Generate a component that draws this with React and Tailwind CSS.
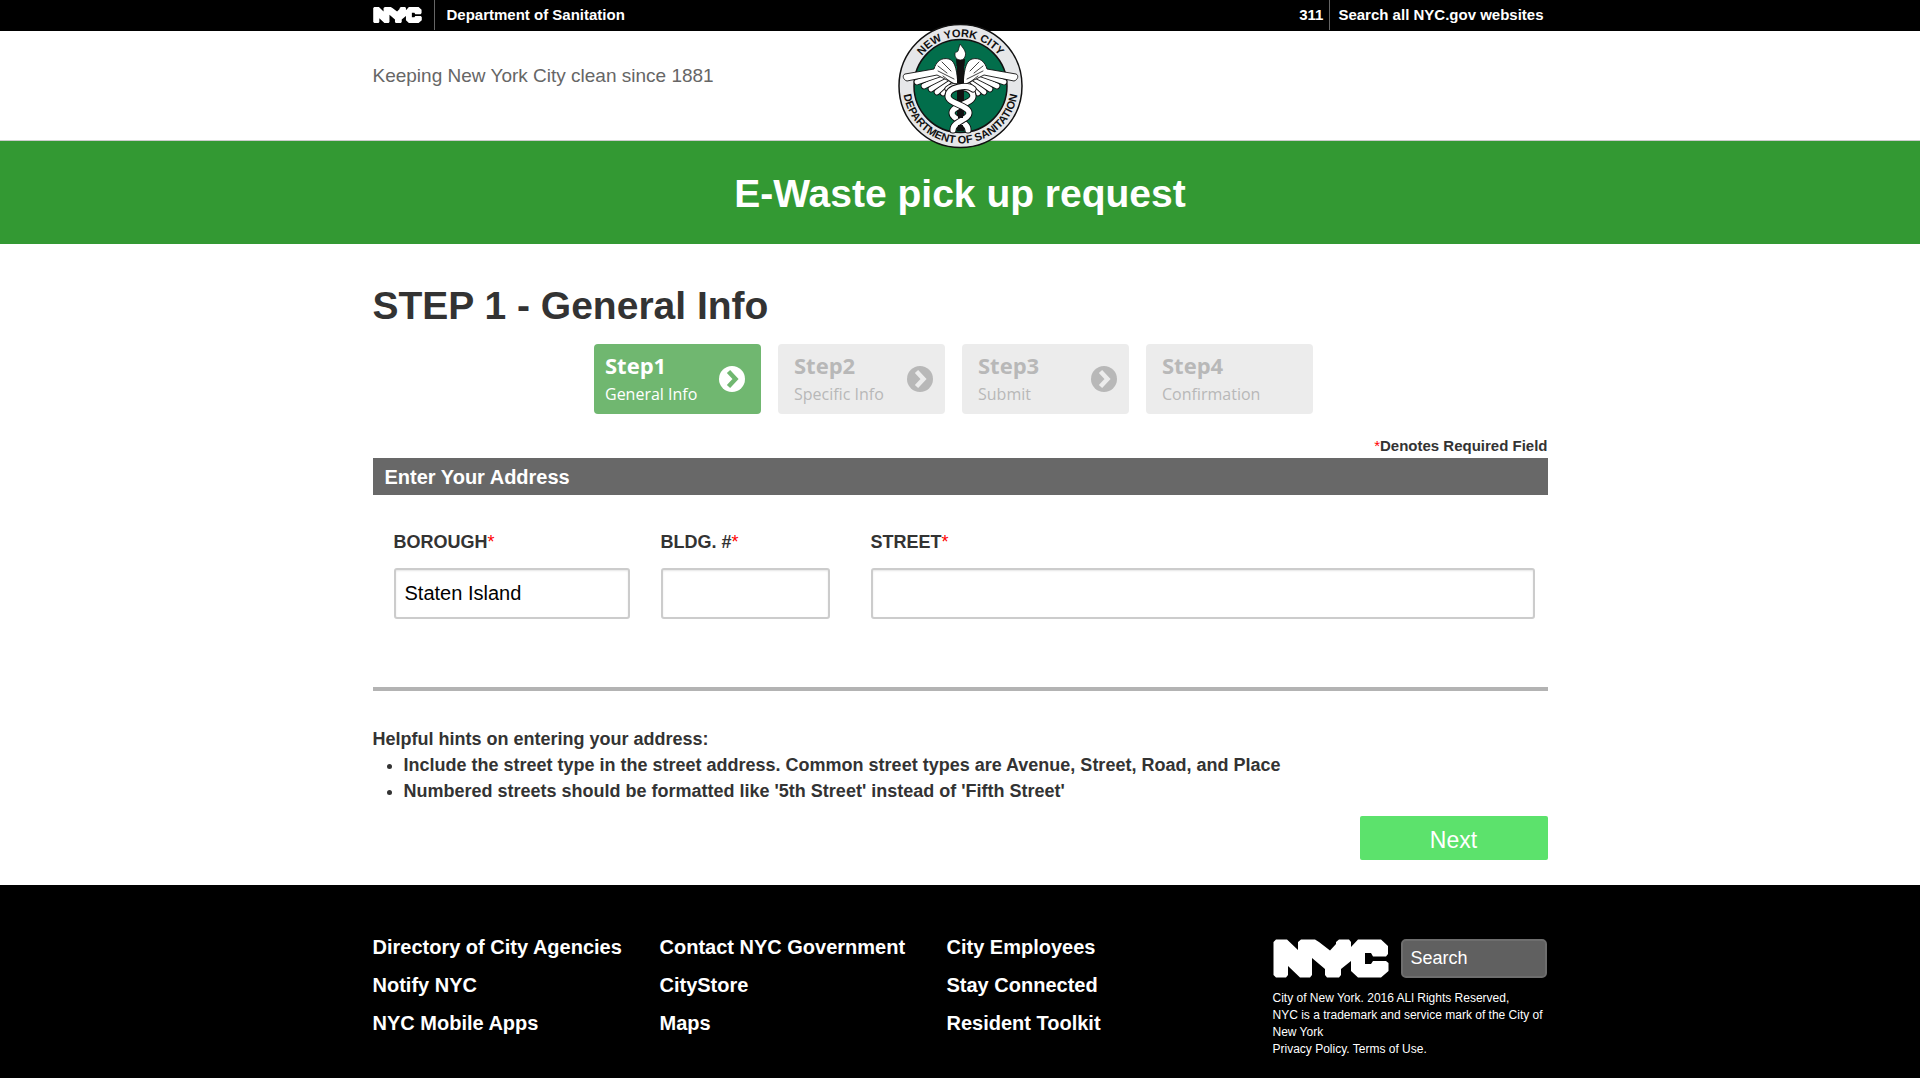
import React, { useState } from "react";

const arial = "font-['Liberation_Sans',Arial,sans-serif]";

function NycLogo({ className }) {
  return (
    <svg viewBox="0 0 116 39" className={className} role="img" aria-label="NYC" fill="currentColor">
      <path d="M3 0.500H14L25 11V3L28 0.500H42L46 3L57 11.500L63 5V3L66 0.500H76L78 3V8L85 0.500H108L115 7V15L113 17.500H100L98 14H92V25H98L100 22H113L115.500 24V32L108 38.500H85L78 32V22L68 30V36L66 38.500H54L52 36V30L39 19V36L37 38.500H27L15 27V36L13 38.500H3L0.500 36V3Z" />
    </svg>
  );
}

const feathers = [
  "M57 60L51 71",
  "M56 58L46 70",
  "M54 56L40 69",
  "M52 54L34 66",
  "M49 52L27 63",
  "M46 50L20 59",
];

function Wing() {
  return (
    <g strokeLinecap="round" strokeLinejoin="round">
      {feathers.map((d) => (
        <g key={d} fill="none">
          <path d={d} stroke="#111" strokeWidth="6.500" />
          <path d={d} stroke="#fff" strokeWidth="4.800" />
        </g>
      ))}
      <path d="M61 62C60 50 59 38 52 36C44 34 39 39 37 46L8 51C5 52 6 57 10 58L40 52L56 60Z" fill="#fff" stroke="#111" strokeWidth="0.900" />
      <path d="M41 43L50 50M45 39L54 48M46 53L55 60M41 48L57 56" fill="none" stroke="#111" strokeWidth="0.800" />
    </g>
  );
}

const snake = "M51 66C57 61 76 64 76 73C76 81 55 82 55 90C55 97 71 98 71 107";

function Snake() {
  return (
    <g fill="none">
      <path d={snake} stroke="#111" strokeWidth="7" strokeLinecap="round" />
      <path d={snake} stroke="#fff" strokeWidth="5.200" strokeLinecap="round" />
    </g>
  );
}

function Seal() {
  return (
    <svg viewBox="0 0 126 126" className="h-[126px] w-[126px]" role="img" aria-label="New York City Department of Sanitation seal">
      <defs>
        <path id="seal-top" d="M14.500 63A49 49 0 0 1 112.500 63" />
        <path id="seal-bottom" d="M6 63A57.500 57.500 0 0 0 121 63" />
      </defs>
      <circle cx="63.500" cy="63" r="61.500" fill="#e6e7e9" stroke="#111" strokeWidth="1.500" />
      <circle cx="63.500" cy="63" r="46.500" fill="#026e4b" stroke="#111" strokeWidth="1.500" />
      <g fill="#111" fontWeight="bold" fontFamily="Liberation Sans, Arial, sans-serif" textAnchor="middle">
        <text fontSize="11">
          <textPath href="#seal-top" startOffset="50%">NEW YORK CITY</textPath>
        </text>
        <text fontSize="11">
          <textPath href="#seal-bottom" startOffset="50%">DEPARTMENT OF SANITATION</textPath>
        </text>
      </g>
      <Wing />
      <g transform="matrix(-1 0 0 1 127 0)">
        <Wing />
      </g>
      <path d="M60 42H67V108H60Z" fill="#111" />
      <path d="M59 36H68L67.500 43H59.500Z" fill="#111" />
      <path d="M63 21C66 25 69 28 68.500 32C68 35 66 37 63.500 37C60 37 57.500 34 58 31C58 28 60 30 61 28Z" fill="#fff" stroke="#111" strokeWidth="0.800" />
      <Snake />
      <g transform="matrix(-1 0 0 1 127 0)">
        <Snake />
      </g>
      <path d="M61 68H66V78H61ZM61 87H66V95H61ZM61 102H66V108H61Z" fill="#111" />
    </svg>
  );
}

function StepArrow({ active }) {
  return (
    <svg viewBox="0 0 26 26" className="h-[26px] w-[26px] shrink-0" aria-hidden="true">
      <circle cx="13" cy="13" r="13" fill={active ? "#fff" : "#b8b8b8"} />
      <path d="M9.500 5.500L16.500 13L9.500 20.500" fill="none" stroke={active ? "#70b770" : "#ececec"} strokeWidth="4.500" />
    </svg>
  );
}

const steps = [
  { name: "Step1", label: "General Info", active: true, arrow: true },
  { name: "Step2", label: "Specific Info", arrow: true },
  { name: "Step3", label: "Submit", arrow: true },
  { name: "Step4", label: "Confirmation" },
];

function Step({ name, label, active, arrow }) {
  return (
    <li
      aria-current={active ? "step" : undefined}
      className={
        "flex h-[70px] w-[167px] items-center justify-between rounded-[4px] font-['Open_Sans','Noto_Sans',sans-serif] " +
        (active ? "bg-[#70b770] pr-4 pl-[11px] text-white" : "bg-[#ececec] pr-3 pl-4 text-[#b8b8b8]")
      }
    >
      <div className="whitespace-nowrap">
        <div className="text-[22px] leading-[30px] font-bold">{name}</div>
        <div className="text-[16px] leading-[28px]">{label}</div>
      </div>
      {arrow && <StepArrow active={active} />}
    </li>
  );
}

function Field({ id, label, value, onChange, className }) {
  return (
    <div className={className}>
      <label htmlFor={id} className="block text-[18px] leading-[26px] font-bold">
        {label}
        <span className="font-normal text-[#f00]">*</span>
      </label>
      <input
        id={id}
        type="text"
        value={value}
        onChange={onChange}
        className="mt-[13px] block h-[51px] w-full rounded-[3px] border-2 border-[#ccc] bg-white px-[9px] text-[20px] text-black shadow-[inset_0_1px_2px_rgba(0,0,0,0.1)]"
      />
    </div>
  );
}

const footerColumns = [
  ["Directory of City Agencies", "Notify NYC", "NYC Mobile Apps"],
  ["Contact NYC Government", "CityStore", "Maps"],
  ["City Employees", "Stay Connected", "Resident Toolkit"],
];

export default function App() {
  const [form, setForm] = useState({ borough: "Staten Island", bldg: "", street: "" });
  const update = (key) => (e) => setForm({ ...form, [key]: e.target.value });

  return (
    <div className={"flex min-h-screen flex-col bg-white text-[#333] " + arial}>
      <div className="bg-black text-white">
        <div className="mx-auto flex h-[31px] max-w-[1175px] items-start justify-between text-[15px] leading-[30px] font-bold">
          <div className="flex">
            <a href="#nyc" className="flex h-[30px] w-[62px] items-center border-r border-[#666]">
              <NycLogo className="h-[18px] w-[49px]" />
            </a>
            <a href="#sanitation" className="pl-3">Department of Sanitation</a>
          </div>
          <div className="flex pr-1">
            <a href="#311" className="border-r border-[#666] pr-[6px]">311</a>
            <a href="#search" className="pl-2">Search all NYC.gov websites</a>
          </div>
        </div>
      </div>

      <header className="border-b border-[#ccc]">
        <div className="relative mx-auto h-[109px] max-w-[1175px]">
          <p className="pt-8 text-[19px] leading-[26px] text-[#666]">Keeping New York City clean since 1881</p>
          <div className="absolute -top-2 left-1/2 -translate-x-1/2">
            <Seal />
          </div>
        </div>
      </header>

      <div className="bg-[#339933] pt-[29px] pb-[26px] text-center text-white">
        <h1 className="text-[39px] leading-[48px] font-bold">E-Waste pick up request</h1>
      </div>

      <main className="mx-auto w-full max-w-[1175px] pt-[38px] pb-[25px]">
        <h2 className="text-[39px] leading-[48px] font-bold">STEP 1 - General Info</h2>
        <ol className="mt-[14px] flex justify-center gap-[17px] pr-[13px]">
          {steps.map((s) => (
            <Step key={s.name} {...s} />
          ))}
        </ol>

        <form onSubmit={(e) => e.preventDefault()}>
          <p className="mt-5 text-right text-[15px] leading-6 font-bold">
            <span className="font-normal text-[#f00]">*</span>Denotes Required Field
          </p>
          <h3 className="bg-[#686868] pt-px pl-3 text-[20px] leading-9 font-bold text-white">Enter Your Address</h3>

          <div className="flex border-b-4 border-[#b3b3b3] pt-[34px] pr-[13px] pb-[68px] pl-[21px]">
            <Field id="borough" label="BOROUGH" value={form.borough} onChange={update("borough")} className="w-[236px]" />
            <Field id="bldg" label="BLDG. #" value={form.bldg} onChange={update("bldg")} className="ml-[31px] w-[169px]" />
            <Field id="street" label="STREET" value={form.street} onChange={update("street")} className="ml-[41px] flex-1" />
          </div>

          <div className="mt-[35px] text-[18px] leading-[26px] font-bold">
            <p>Helpful hints on entering your address:</p>
            <ul className="list-disc pl-[31px]">
              <li>Include the street type in the street address. Common street types are Avenue, Street, Road, and Place</li>
              <li>Numbered streets should be formatted like '5th Street' instead of 'Fifth Street'</li>
            </ul>
          </div>

          <div className="mt-3 flex justify-end">
            <button type="submit" className="h-11 w-[188px] rounded-[2px] bg-[#5ce26c] pt-1 text-[23px] text-white">
              Next
            </button>
          </div>
        </form>
      </main>

      <footer className="flex-1 bg-black text-white">
        <div className="mx-auto flex max-w-[1175px] pt-[43px] pb-4">
          {footerColumns.map((links) => (
            <ul key={links[0]} className="w-[287px] text-[20px] leading-[38px] font-bold">
              {links.map((text) => (
                <li key={text}>
                  <a href="#footer">{text}</a>
                </li>
              ))}
            </ul>
          ))}
          <div className="ml-auto w-[275px] pt-[11px]">
            <div className="flex items-center justify-between">
              <NycLogo className="h-[39px] w-[116px]" />
              <input
                type="search"
                aria-label="Search"
                placeholder="Search"
                className="mr-px h-[39px] w-[146px] rounded-[5px] border-2 border-[#6e6e6e] bg-[#606060] px-2 text-[18px] text-white placeholder:text-white placeholder:opacity-100"
              />
            </div>
            <p className="mt-3 text-[12px] leading-[17px]">
              City of New York. 2016 ALl Rights Reserved,
              <br />
              NYC is a trademark and service mark of the City of New York
              <br />
              <a href="#privacy">Privacy Policy.</a> <a href="#terms">Terms of Use.</a>
            </p>
          </div>
        </div>
      </footer>
    </div>
  );
}
